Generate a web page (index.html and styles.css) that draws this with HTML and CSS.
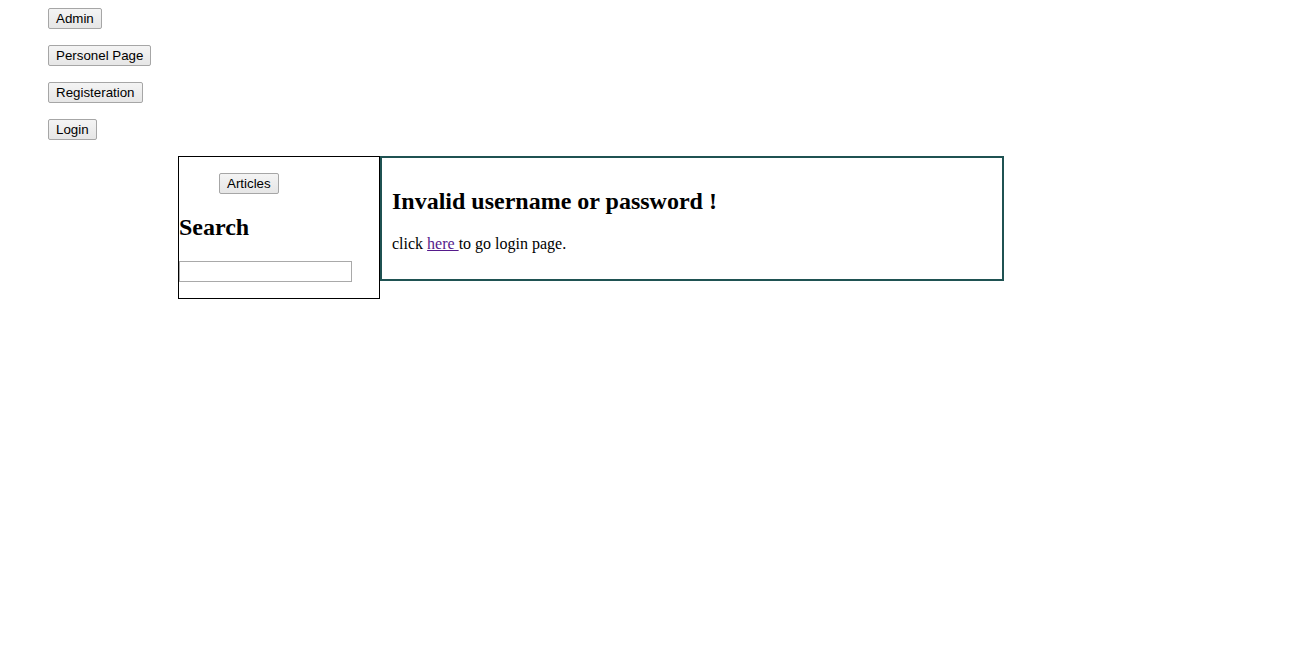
FILE: index.html
```html
<!DOCTYPE html>
<html>
<head>
<meta charset="utf-8">
<link rel="stylesheet" href="styles.css">
</head>
<body>
<nav class="topnav">
  <button class="btn">Admin</button>
  <button class="btn">Personel Page</button>
  <button class="btn">Registeration</button>
  <button class="btn">Login</button>
</nav>
<div class="layout">
  <aside class="sidebar">
    <div class="side-menu">
      <button class="btn">Articles</button>
    </div>
    <h2 class="side-title">Search</h2>
    <p class="search-row"><input class="search-input" type="text"></p>
  </aside>
  <main class="content">
    <h2 class="msg-title">Invalid username or password !</h2>
    <p class="msg-text">click <a class="link" href="#">here </a>to go login page.</p>
  </main>
</div>
</body>
</html>
```

FILE: styles.css
```css
body {
  margin: 8px;
  font-family: "Liberation Serif", "Times New Roman", serif;
  font-size: 16px;
  color: #000;
  background: #fff;
}

.topnav {
  display: flex;
  flex-direction: column;
  align-items: flex-start;
  gap: 16px;
  padding-left: 40px;
}

.btn {
  font-family: "Liberation Sans", Arial, sans-serif;
  font-size: 13.333px;
  line-height: 15px;
  height: 21px;
  padding: 1px 7px;
  margin: 0;
  border: 1px solid #a6a6a6;
  border-radius: 2px;
  background: linear-gradient(#f4f4f4, #e6e6e6);
  color: #000;
}

.layout {
  display: flex;
  align-items: flex-start;
  margin-top: 16px;
  padding-left: 170px;
}

.sidebar {
  width: 200px;
  border: 1px solid #000;
}

.side-menu {
  margin: 16px 0;
  padding-left: 40px;
}

.side-title {
  font-size: 24px;
  font-weight: bold;
  margin: 19.92px 0;
}

.search-row {
  margin: 16px 0;
  line-height: 0;
}

.search-input {
  box-sizing: border-box;
  width: 173px;
  height: 21px;
  margin: 0;
  padding: 1px 2px;
  border: 1px solid #a9a9a9;
  font-family: "Liberation Sans", Arial, sans-serif;
  font-size: 13.333px;
}

.content {
  width: 600px;
  padding: 0 10px;
  border: 2px solid #1f5252;
}

.msg-title {
  font-size: 24px;
  font-weight: bold;
  margin: 30px 0 19.92px;
}

.msg-text {
  margin: 19.92px 0 26px;
}

.link {
  color: #551a8b;
}
```
